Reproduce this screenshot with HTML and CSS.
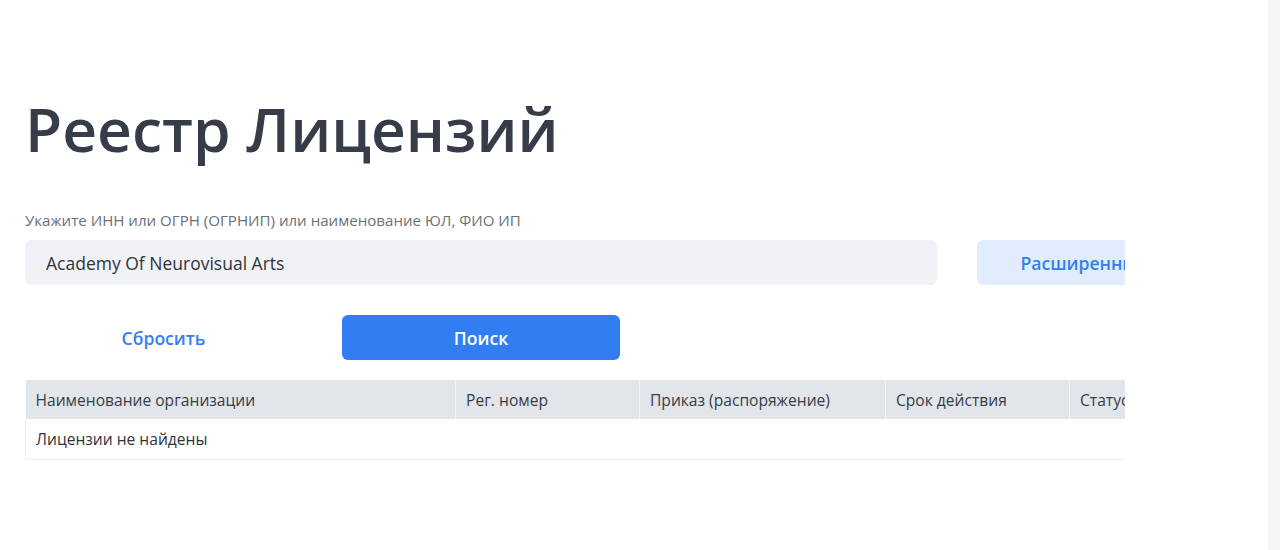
FILE: index.html
```html
<!DOCTYPE html>
<html lang="ru">
<head>
<meta charset="utf-8">
<title>Реестр Лицензий</title>
<link rel="stylesheet" href="styles.css">
</head>
<body>
<div class="page">
  <main class="main">
    <div class="content">
      <h1 class="title">Реестр Лицензий</h1>
      <label class="label" for="q">Укажите ИНН или ОГРН (ОГРНИП) или наименование ЮЛ, ФИО ИП</label>
      <div class="search-row">
        <input id="q" class="input" type="text" value="Academy Of Neurovisual Arts">
        <button class="btn btn-light">Расширенный поиск</button>
      </div>
      <div class="actions">
        <button class="btn btn-link">Сбросить</button>
        <button class="btn btn-primary">Поиск</button>
      </div>
      <table class="table">
        <colgroup>
          <col class="c1"><col class="c2"><col class="c3"><col class="c4"><col class="c5">
        </colgroup>
        <thead>
          <tr>
            <th>Наименование организации</th>
            <th>Рег. номер</th>
            <th>Приказ (распоряжение)</th>
            <th>Срок действия</th>
            <th>Статус</th>
          </tr>
        </thead>
        <tbody>
          <tr><td colspan="5">Лицензии не найдены</td></tr>
        </tbody>
      </table>
    </div>
  </main>
  <div class="scrolltrack"></div>
</div>
</body>
</html>
```

FILE: styles.css
```css
* { box-sizing: border-box; }
html, body { margin: 0; padding: 0; height: 100%; }
body {
  font-family: "Open Sans", "Noto Sans", sans-serif;
  color: #373d48;
  background: #fff;
}
.page {
  display: flex;
  height: 550px;
  overflow: hidden;
}
.main {
  flex: 1;
  padding: 0 0 0 25px;
}
.content {
  width: 1100px;
  overflow: hidden;
  padding-top: 88px;
}
.scrolltrack {
  width: 12px;
  flex: 0 0 12px;
  background: #f5f5f5;
}
.title {
  margin: 0;
  font-size: 60.5px;
  font-weight: 600;
  line-height: 82px;
  color: #373d48;
  white-space: nowrap;
}
.label {
  display: block;
  margin-top: 40px;
  font-size: 15.1px;
  line-height: 20px;
  color: #6b7079;
  white-space: nowrap;
}
.search-row {
  display: flex;
  gap: 40px;
  margin-top: 10px;
  width: 1260px;
}
.input {
  width: 912px;
  height: 45px;
  border: none;
  border-radius: 6px;
  background: #f1f2f6;
  padding: 0 21px;
  font-family: inherit;
  font-size: 17.5px;
  color: #2f343c;
  outline: none;
}
.btn {
  height: 45px;
  width: 278px;
  border: none;
  border-radius: 6px;
  font-family: inherit;
  font-size: 17.6px;
  font-weight: 600;
  cursor: pointer;
  white-space: nowrap;
  flex: 0 0 auto;
}
.btn-light {
  background: #e1edfd;
  color: #347ff0;
  width: 272px;
}
.actions {
  display: flex;
  gap: 40px;
  margin-top: 30px;
}
.btn-link {
  background: transparent;
  color: #347ff0;
  width: 277px;
}
.btn-primary {
  background: #317ef2;
  color: #fff;
}
.table {
  margin-top: 20px;
  border-collapse: collapse;
  table-layout: fixed;
  width: 1240px;
  font-size: 15.6px;
}
.c1 { width: 430px; }
.c2 { width: 184px; }
.c3 { width: 246px; }
.c4 { width: 184px; }
.c5 { width: 196px; }
.table th {
  background: #e2e5ea;
  font-weight: 400;
  text-align: left;
  height: 39px;
  padding: 0 10px;
  color: #373d48;
  border-left: 1px solid #f3f4f6;
  white-space: nowrap;
}
.table th:first-child { border-left: none; }
.table td {
  height: 40px;
  padding: 0 10px;
  border-left: 1px solid #eceef0;
  border-bottom: 1px solid #eceef0;
  color: #2f343c;
}
```
